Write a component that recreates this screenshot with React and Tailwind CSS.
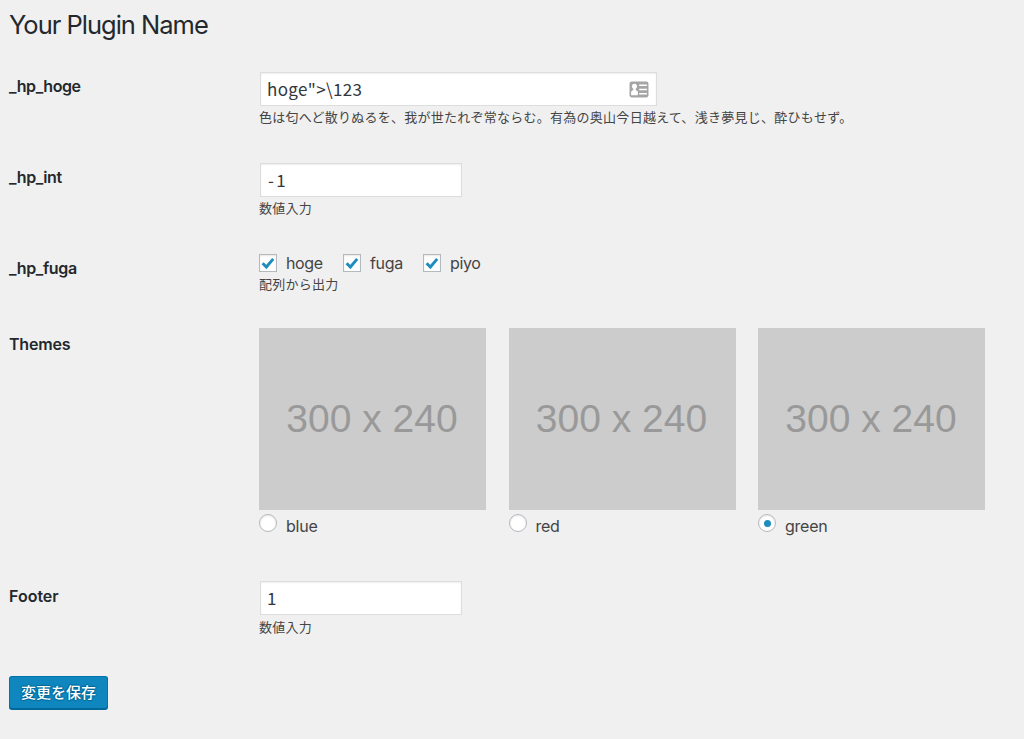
import React from 'react';

function Row({ label, height, labelTop, children }) {
  return (
    <div className={`flex ${height}`}>
      <div className={`w-[250px] shrink-0 text-[16px] leading-5 font-semibold text-[#23282d] ${labelTop}`}>
        {label}
      </div>
      <div className="min-w-0 flex-1">{children}</div>
    </div>
  );
}

function Field({ value, width, tracking = 'tracking-[0.35px]', children }) {
  return (
    <div className={`ml-px flex h-[34px] items-center justify-between border border-[#dddddd] bg-white pr-[7px] pl-[6px] shadow-[inset_0_1px_2px_rgba(0,0,0,0.07)] ${width}`}>
      <span className={`font-['Noto_Sans_CJK_JP',sans-serif] text-[17px] leading-5 text-[#32373c] ${tracking}`}>{value}</span>
      {children}
    </div>
  );
}

function Description({ children }) {
  return (
    <p className="mt-px font-['Noto_Sans_CJK_JP',sans-serif] text-[13px] leading-5 tracking-[0.26px] whitespace-nowrap text-[#444444]">
      {children}
    </p>
  );
}

function ContactIcon() {
  return (
    <svg className="h-[17px] w-[20px]" viewBox="0 0 19 16" fill="none">
      <rect x="0.5" y="0.5" width="18" height="15" rx="2" fill="#a5a5a5" />
      <circle cx="5.2" cy="5" r="2.4" fill="#fff" />
      <path d="M4 6.5h2.4v2L8.4 10v3.4H2V10l2-1.5z" fill="#fff" />
      <path d="M9.7 4H17M9.7 8H17M9.7 12H17" stroke="#fff" strokeWidth="1.4" />
    </svg>
  );
}

function Check({ label, width }) {
  return (
    <label className={`flex items-center ${width}`}>
      <span className="mr-[9px] flex h-[18px] w-[18px] items-center justify-center border border-[#b4b9be] bg-white shadow-[inset_0_1px_2px_rgba(0,0,0,0.1)]">
        <svg className="h-[14px] w-[14px]" viewBox="0 0 14 14" fill="none">
          <path d="M1.6 7.2L5.4 11L12.2 2.9" stroke="#1e8cbe" strokeWidth="2.9" />
        </svg>
      </span>
      <span className="text-[16px] leading-5 tracking-[-0.35px] text-[#444444]">{label}</span>
    </label>
  );
}

function Theme({ label, checked }) {
  return (
    <div className="w-[227px]">
      <div className="flex h-[182px] items-center justify-center bg-[#cccccc] pr-px pb-[2px]">
        <span className="font-['Liberation_Sans',Arial,sans-serif] text-[39px] leading-none text-[#999999]">
          300 x 240
        </span>
      </div>
      <label className="mt-[4px] flex items-start">
        <span className="mr-[9px] flex h-[18px] w-[18px] items-center justify-center rounded-full border border-[#b4b9be] bg-white shadow-[inset_0_1px_2px_rgba(0,0,0,0.1)]">
          {checked && <span className="h-[7px] w-[7px] rounded-full bg-[#1e8cbe]" />}
        </span>
        <span className="mt-[2px] text-[16px] leading-5 tracking-[-0.25px] text-[#444444]">{label}</span>
      </label>
    </div>
  );
}

export default function App() {
  return (
    <div className="h-[739px] w-full overflow-hidden bg-[#f0f0f0] pl-[9px] font-['Inter','Noto_Sans_CJK_JP',sans-serif]">
      <h1 className="h-[72px] pt-[9px] text-[25.5px] leading-8 font-normal tracking-[-1px] text-[#23282d]">
        Your Plugin Name
      </h1>
      <Row label="_hp_hoge" height="h-[91px]" labelTop="pt-[4px] tracking-[-0.4px]">
        <Field value={'hoge">\\123'} width="w-[397px]">
          <ContactIcon />
        </Field>
        <Description>色は匂へど散りぬるを、我が世たれぞ常ならむ。有為の奥山今日越えて、浅き夢見じ、酔ひもせず。</Description>
      </Row>
      <Row label="_hp_int" height="h-[90px]" labelTop="pt-[4px] tracking-[-0.35px]">
        <Field value="-1" width="w-[202px]" tracking="pl-px tracking-[2.4px]" />
        <Description>数値入力</Description>
      </Row>
      <Row label="_hp_fuga" height="h-[75px]" labelTop="pt-[5px] tracking-[-0.35px]">
        <div className="flex h-[20px] items-center pb-px">
          <Check label="hoge" width="w-[84px]" />
          <Check label="fuga" width="w-[80px]" />
          <Check label="piyo" width="w-[80px]" />
        </div>
        <Description>配列から出力</Description>
      </Row>
      <Row label="Themes" height="h-[253px]" labelTop="pt-[6px] tracking-[-0.2px]">
        <div className="flex gap-[22.5px]">
          <Theme label="blue" />
          <Theme label="red" />
          <Theme label="green" checked />
        </div>
      </Row>
      <Row label="Footer" height="h-[95px]" labelTop="pt-[5px] tracking-[0px]">
        <Field value="1" width="w-[202px]" />
        <div className="pt-px">
          <Description>数値入力</Description>
        </div>
      </Row>
      <button className="flex h-[33px] w-[99px] items-center justify-center rounded-[3px] border border-[#0073aa] border-b-[#006799] bg-[#0f86bd] pb-[3px] font-['Noto_Sans_CJK_JP',sans-serif] text-[15px] leading-none font-medium text-white shadow-[0_1px_0_#006799] [text-shadow:0_-1px_1px_#006799,1px_0_1px_#006799,0_1px_1px_#006799,-1px_0_1px_#006799]">
        変更を保存
      </button>
    </div>
  );
}
